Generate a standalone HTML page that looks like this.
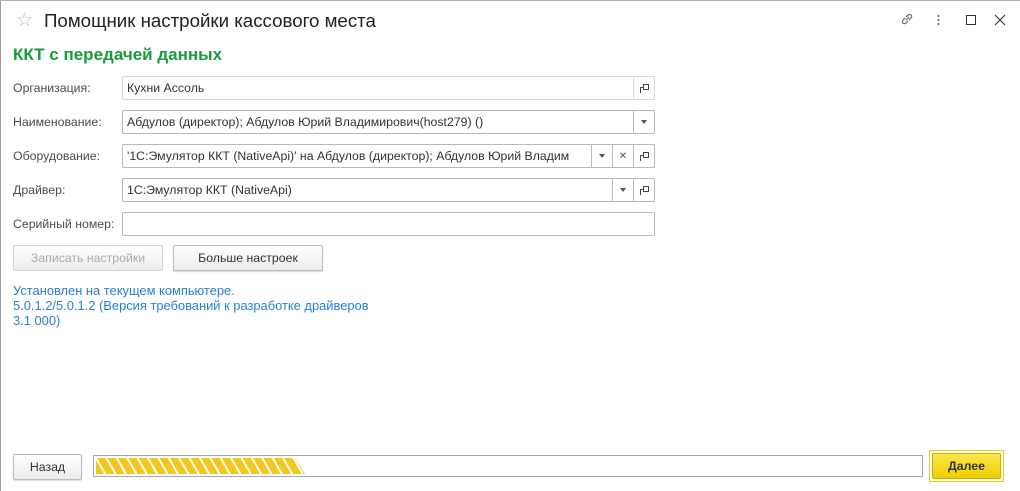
<!DOCTYPE html>
<html><head><meta charset="utf-8"><style>
*{box-sizing:border-box;margin:0;padding:0}
body{width:1020px;height:491px;background:#fff;font-family:"Liberation Sans",sans-serif;font-size:12.3px;color:#4d4d4d;position:relative;overflow:hidden}
.a{position:absolute}
.title{left:44px;top:10px;font-size:18.7px;color:#222}
.sub{left:13px;top:45px;font-size:17px;font-weight:bold;color:#1a9a3a}
.lbl{left:13px;color:#4d4d4d}
.fld{position:absolute;left:122px;width:533px;height:24px;border:1px solid #b8b8b8;border-radius:2px;display:flex;background:#fff}
.fld .t{flex:1;padding:4px 4px;color:#333;white-space:nowrap;overflow:hidden}
.fld .b{width:21px;border-left:1px solid #b8b8b8;display:flex;align-items:center;justify-content:center;font-size:10px;color:#555}
.dd{width:0;height:0;border-left:3px solid transparent;border-right:3px solid transparent;border-top:4px solid #555}
.cp{width:9px;height:9px;position:relative}
.cp:before{content:"";position:absolute;left:3px;top:0;width:6px;height:6px;border:1.5px solid #444;box-sizing:border-box}
.cp:after{content:"";position:absolute;left:0;top:3px;width:4px;height:6px;border-left:1.5px solid #444;border-top:1.5px solid #444;box-sizing:border-box}
.btn{position:absolute;height:26px;border:1px solid #bbb;border-radius:2px;background:linear-gradient(#fff,#ececec);text-align:center;line-height:24px;box-shadow:0 1px 1px rgba(0,0,0,.15)}
.info{left:13px;top:283px;color:#2a7ed6;line-height:15px;font-size:12.9px}
</style></head><body>
<div class="a" style="left:0;top:0;width:1px;height:491px;background:#a0a0a0"></div>
<div class="a" style="left:0;top:0;width:1020px;height:1px;background:#b0b0b0"></div>
<div class="a" style="left:16px;top:9px;font-size:19px;color:#bbb">☆</div>
<div class="a title">Помощник настройки кассового места</div>
<svg class="a" style="left:899px;top:11px" width="16" height="16" viewBox="0 0 16 16" fill="none" stroke="#777" stroke-width="1.3"><path d="M7 9l3-3M6 7l-2 2a2 2 0 003 3l2-2M10 9l2-2a2 2 0 00-3-3L7 6"/></svg>
<div class="a" style="left:937px;top:14px;width:3px;height:12px;background:radial-gradient(circle,#777 1px,transparent 1.3px) 0 0/3px 4px"></div>
<div class="a" style="left:966px;top:15px;width:10px;height:10px;border:1.3px solid #333"></div>
<svg class="a" style="left:994px;top:14px" width="12" height="12" viewBox="0 0 12 12" stroke="#333" stroke-width="1.2"><path d="M1 1l10 10M11 1L1 11"/></svg>
<div class="a sub">ККТ с передачей данных</div>

<div class="a lbl" style="top:81px">Организация:</div>
<div class="fld" style="top:76px;border-color:#d8d8d8"><div class="t">Кухни Ассоль</div><div class="b" style="border-color:#d8d8d8"><div class="cp"></div></div></div>
<div class="a lbl" style="top:115px">Наименование:</div>
<div class="fld" style="top:110px"><div class="t">Абдулов (директор); Абдулов Юрий Владимирович(host279) ()</div><div class="b"><div class="dd"></div></div></div>
<div class="a lbl" style="top:149px">Оборудование:</div>
<div class="fld" style="top:144px"><div class="t">'1С:Эмулятор ККТ (NativeApi)' на Абдулов (директор); Абдулов Юрий Владим</div><div class="b"><div class="dd"></div></div><div class="b">✕</div><div class="b"><div class="cp"></div></div></div>
<div class="a lbl" style="top:183px">Драйвер:</div>
<div class="fld" style="top:178px"><div class="t">1С:Эмулятор ККТ (NativeApi)</div><div class="b"><div class="dd"></div></div><div class="b"><div class="cp"></div></div></div>
<div class="a lbl" style="top:217px">Серийный номер:</div>
<div class="fld" style="top:212px"><div class="t"></div></div>

<div class="btn" style="left:13px;top:245px;width:150px;color:#aaa;border-color:#d4d4d4;box-shadow:none">Записать настройки</div>
<div class="btn" style="left:173px;top:245px;width:150px;color:#333">Больше настроек</div>
<div class="a info">Установлен на текущем компьютере.<br>5.0.1.2/5.0.1.2 (Версия требований к разработке драйверов<br>3.1 000)</div>

<div class="btn" style="left:13px;top:454px;width:69px;color:#333">Назад</div>
<div class="a" style="left:93px;top:455px;width:830px;height:22px;border:1px solid #a8a8a8;background:#fff"></div>
<div class="a" style="left:96px;top:458px;width:209px;height:16px;clip-path:polygon(0 0,199px 0,209px 16px,0 16px);background:repeating-linear-gradient(60deg,#f5c71a 0 7px,#fff 7px 9px)"></div>
<div class="a" style="left:929px;top:450px;width:75px;height:32px;border:1px solid #f0d000"></div>
<div class="a" style="left:932px;top:453px;width:69px;height:26px;background:linear-gradient(#fbe84a,#ecd000);border:1px solid #c9b000;border-radius:2px;text-align:center;line-height:24px;color:#333;font-weight:bold">Далее</div>
</body></html>
